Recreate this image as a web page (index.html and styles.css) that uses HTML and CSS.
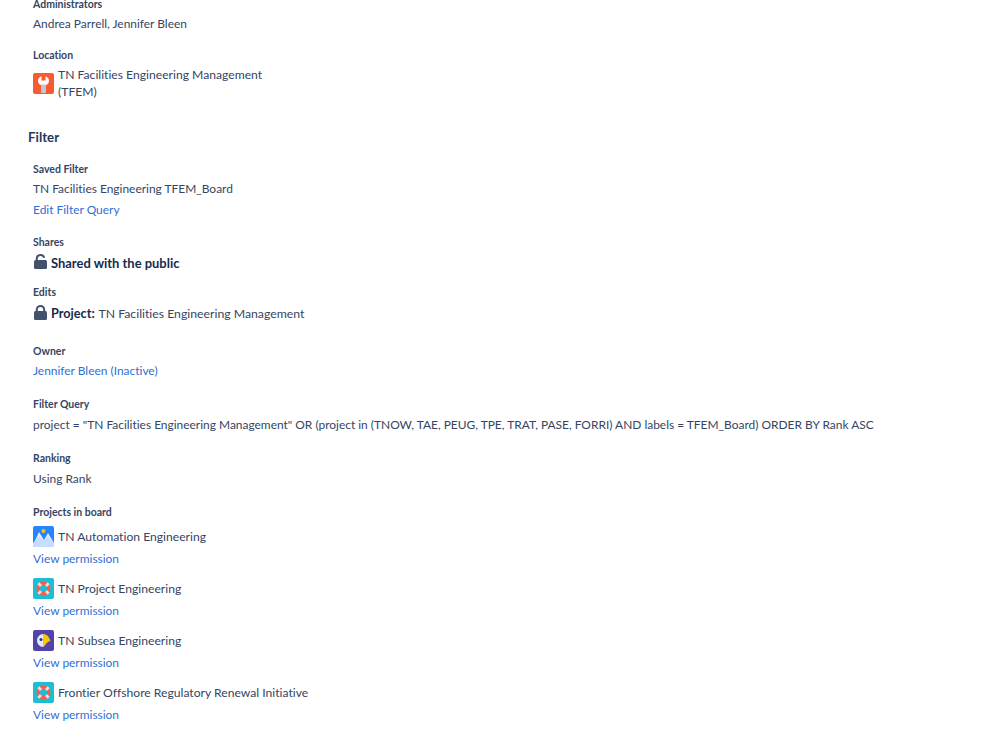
FILE: index.html
```html
<!DOCTYPE html>
<html lang="en">
<head>
<meta charset="utf-8">
<title>Board settings</title>
<link rel="stylesheet" href="styles.css">
</head>
<body>
<svg class="defs" width="0" height="0" aria-hidden="true">
  <defs>
    <symbol id="buoy" viewBox="0 0 21 21">
      <rect width="21" height="21" rx="2" fill="#1fbcd6"/>
      <circle cx="10.5" cy="10.5" r="7" fill="#f0604f"/>
      <path d="M4.300 6.300l2-2 3 3-2 2zM16.700 6.300l-2-2-3 3 2 2zM4.300 14.700l2 2 3-3-2-2zM16.700 14.700l-2 2-3-3 2-2z" fill="#ffd5ce"/>
      <circle cx="10.5" cy="10.5" r="3.500" fill="#1fbcd6"/>
    </symbol>
  </defs>
</svg>
<main class="page">
  <section class="field field-admins">
    <h4 class="label">Administrators</h4>
    <p class="value">Andrea Parrell, Jennifer Bleen</p>
  </section>
  <section class="field field-location">
    <h4 class="label">Location</h4>
    <div class="project project-wrap">
      <svg class="avatar" viewBox="0 0 21 21" aria-hidden="true">
        <rect width="21" height="21" rx="2" fill="#fa5a32"/>
        <path d="M8.500 3.200v4.300h4V3.200c2 .7 3.500 2.400 3.500 4.500 0 2.200-1.300 3.700-3 4.400v5.400a2.500 2.500 0 0 1-5 0v-5.400c-1.700-.7-3-2.200-3-4.400 0-2.100 1.500-3.800 3.500-4.500z" fill="#fff"/>
        <path d="M8 11.500h5v6a2.500 2.500 0 0 1-5 0z" fill="#c1c7d0"/>
      </svg>
      <span class="project-name">TN Facilities Engineering Management (TFEM)</span>
    </div>
  </section>

  <h3 class="heading">Filter</h3>

  <section class="field field-saved">
    <h4 class="label">Saved Filter</h4>
    <p class="value">TN Facilities Engineering TFEM_Board</p>
    <a class="link link-edit" href="#">Edit Filter Query</a>
  </section>
  <section class="field field-shares">
    <h4 class="label">Shares</h4>
    <div class="perm">
      <svg class="lock" viewBox="0 0 13 15" aria-hidden="true">
        <path d="M2.800 7V4.500a3.700 3.500 0 0 1 7.300-.8" fill="none" stroke="#42526e" stroke-width="2"/>
        <rect y="6" width="13" height="9" rx="1.500" fill="#42526e"/>
      </svg>
      <strong class="strong strong-wide">Shared with the public</strong>
    </div>
  </section>
  <section class="field field-edits">
    <h4 class="label">Edits</h4>
    <div class="perm">
      <svg class="lock" viewBox="0 0 13 15" aria-hidden="true">
        <path d="M2.800 7V4.500a3.700 3.500 0 0 1 7.400 0V7" fill="none" stroke="#42526e" stroke-width="2"/>
        <rect y="6" width="13" height="9" rx="1.500" fill="#42526e"/>
      </svg>
      <span class="perm-text"><strong class="strong">Project:</strong> TN Facilities Engineering Management</span>
    </div>
  </section>
  <section class="field field-owner">
    <h4 class="label">Owner</h4>
    <a class="link" href="#">Jennifer Bleen (Inactive)</a>
  </section>
  <section class="field field-query">
    <h4 class="label">Filter Query</h4>
    <p class="value value-low">project = "TN Facilities Engineering Management" OR (project in (TNOW, TAE, PEUG, TPE, TRAT, PASE, FORRI) AND labels = TFEM_Board) ORDER BY Rank ASC</p>
  </section>
  <section class="field field-ranking">
    <h4 class="label">Ranking</h4>
    <p class="value value-low">Using Rank</p>
  </section>
  <section class="field field-projects">
    <h4 class="label">Projects in board</h4>
    <div class="board-list">
      <div class="board-item">
        <div class="project">
          <svg class="avatar" viewBox="0 0 21 21" aria-hidden="true">
            <rect width="21" height="21" rx="2" fill="#2684ff"/>
            <circle cx="10.500" cy="5" r="2" fill="#ffc400"/>
            <path d="M0 19L6 6l5 8 4-7 6 10v2a2 2 0 0 1-2 2H2a2 2 0 0 1-2-2z" fill="#deebff"/>
            <path d="M0 17l6-6 5 4 4-4 6 6v2a2 2 0 0 1-2 2H2a2 2 0 0 1-2-2z" fill="#c7dcff"/>
          </svg>
          <span class="project-name">TN Automation Engineering</span>
        </div>
        <a class="link" href="#">View permission</a>
      </div>
      <div class="board-item">
        <div class="project">
          <svg class="avatar" aria-hidden="true"><use href="#buoy"/></svg>
          <span class="project-name">TN Project Engineering</span>
        </div>
        <a class="link" href="#">View permission</a>
      </div>
      <div class="board-item">
        <div class="project">
          <svg class="avatar" viewBox="0 0 21 21" aria-hidden="true">
            <rect width="21" height="21" rx="2" fill="#5243aa"/>
            <path d="M10.500 4c-3.600 0-6.500 2.900-6.500 6.500s2.900 6.500 6.500 6.500z" fill="#deebff"/>
            <path d="M10 4c3.500 0 6 2.500 7.500 7-2.500.5-4 2-5.500 4.500L10 17z" fill="#ffc400"/>
            <circle cx="8" cy="9.500" r="1.500" fill="#253858"/>
          </svg>
          <span class="project-name">TN Subsea Engineering</span>
        </div>
        <a class="link" href="#">View permission</a>
      </div>
      <div class="board-item">
        <div class="project">
          <svg class="avatar" aria-hidden="true"><use href="#buoy"/></svg>
          <span class="project-name">Frontier Offshore Regulatory Renewal Initiative</span>
        </div>
        <a class="link" href="#">View permission</a>
      </div>
    </div>
  </section>
</main>
</body>
</html>
```
FILE: styles.css
```css
html, body {
  margin: 0;
  padding: 0;
  background: #fff;
  overflow: hidden;
}
body {
  height: 729px;
  font-family: Lato, "Noto Sans", sans-serif;
  font-size: 11.95px;
  line-height: 20px;
  color: #344563;
  font-variant-ligatures: none;
}
.defs { display: block; height: 0; }
.page {
  margin-top: -6px;
  padding-left: 33px;
}
.label {
  margin: 0;
  font-size: 10.5px;
  font-weight: 700;
  line-height: 20px;
  color: #344563;
}
.value { margin: 0; white-space: nowrap; }
.value-low { margin-top: 1px; }
.link { display: block; color: #2f6fd6; text-decoration: none; }
.strong { font-size: 12.7px; font-weight: 700; color: #172b4d; margin-right: 1px; }
.strong-wide { font-size: 12.95px; }
.heading {
  margin: 27px 0 0 -5px;
  font-size: 13.3px;
  font-weight: 700;
  line-height: 20px;
  color: #253858;
}
.field-location { margin-top: 11px; }
.field-saved { margin-top: 12px; }
.link-edit { margin-top: 1px; }
.field-shares { margin-top: 12px; }
.field-edits { margin-top: 9px; }
.field-owner { margin-top: 17px; }
.field-query { margin-top: 13px; }
.field-ranking { margin-top: 13px; }
.field-projects { margin-top: 13px; }

.project { display: flex; align-items: center; gap: 4px; min-height: 21px; }
.project-name, .perm-text { font-size: 12.15px; }
.perm-text { font-size: 12.25px; }
.project-wrap { width: 240px; line-height: 17px; margin-top: 1px; }
.avatar { width: 21px; height: 21px; flex: none; }
.perm { display: flex; align-items: center; gap: 4px; margin-top: 1px; padding-left: 1px; }
.lock { width: 13px; height: 15px; flex: none; margin-top: -3px; }
.board-list { display: flex; flex-direction: column; gap: 9px; margin-top: 4px; }
.board-item .link { margin-top: 2px; }
```
